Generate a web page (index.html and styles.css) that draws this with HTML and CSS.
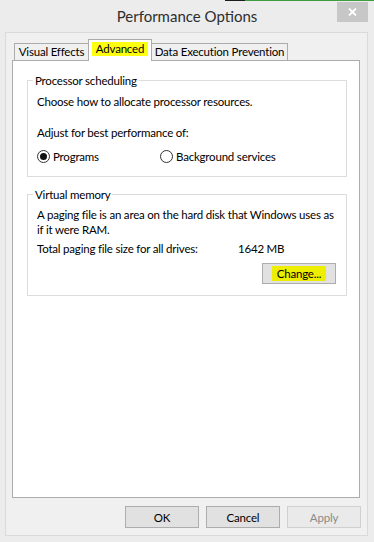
FILE: index.html
```html
<!DOCTYPE html>
<html lang="en">
<head>
<meta charset="UTF-8" />
<title>Performance Options</title>
<link rel="stylesheet" href="styles.css">
</head>
<body>

<div class="window">
  <div class="topedge"><span class="edge-dark"></span><span class="edge-green"></span></div>
  <div class="titlebar">
    <div class="title">Performance Options</div>
    <div class="close">
      <svg width="9" height="8" viewBox="0 0 9 8"><path d="M1 0.5 L8 7.5 M8 0.5 L1 7.5" stroke="#fff" stroke-width="1.8" fill="none"/></svg>
    </div>
  </div>

  <div class="panel">
    <div class="tabs">
      <div class="tab tab-first">Visual Effects</div>
      <div class="tab selected"><span class="mark">Advanced</span></div>
      <div class="tab tab-last">Data Execution Prevention</div>
    </div>

    <div class="page">
      <fieldset class="group group-cpu">
        <legend>Processor scheduling</legend>
        <div class="line first">Choose how to allocate processor resources.</div>
        <div class="line adjust">Adjust for best performance of:</div>
        <div class="radios">
          <label class="radio"><span class="dot checked"></span>Programs</label>
          <label class="radio second"><span class="dot"></span>Background services</label>
        </div>
      </fieldset>

      <fieldset class="group group-vm">
        <legend>Virtual memory</legend>
        <div class="para">A paging file is an area on the hard disk that Windows uses as if it were RAM.</div>
        <div class="total">
          <span class="total-label">Total paging file size for all drives:</span>
          <span>1642 MB</span>
        </div>
        <div class="change-row">
          <button class="btn"><span class="mark-soft">Change...</span></button>
        </div>
      </fieldset>
    </div>

    <div class="footer">
      <button class="btn">OK</button>
      <button class="btn">Cancel</button>
      <button class="btn disabled">Apply</button>
    </div>
  </div>
</div>

</body>
</html>
```

FILE: styles.css
```css
body {
  margin: 0;
  font-family: Lato, "Liberation Sans", sans-serif;
  font-size: 11.5px;
  letter-spacing: -0.2px;
  color: #000;
  background: #ececec;
}
.window {
  width: 374px;
  height: 542px;
  background: #ececec;
}
.topedge {
  height: 1px;
  display: flex;
  justify-content: flex-end;
}
.edge-dark {
  width: 20px;
  background: #1c1c1c;
}
.edge-green {
  width: 129px;
  background: #3f9c3f;
}
.titlebar {
  height: 31px;
  display: flex;
  align-items: flex-start;
  padding-left: 37px;
}
.title {
  flex: 1;
  text-align: center;
  font-size: 15px;
  letter-spacing: 0;
  line-height: 30px;
  color: #2e2e2e;
}
.close {
  width: 31px;
  height: 20px;
  margin-top: 1px;
  margin-right: 6px;
  background: #c7c7c7;
  display: flex;
  align-items: center;
  justify-content: center;
}
.panel {
  margin: 0 6px 0 5px;
  height: 504px;
  box-sizing: border-box;
  border: 1px solid #dadada;
  background: #f0f0f0;
}
.tabs {
  display: flex;
  align-items: flex-end;
  padding: 6px 0 0 8px;
  height: 27px;
  box-sizing: border-box;
}
.tab {
  height: 17px;
  box-sizing: border-box;
  border: 1px solid #acacac;
  border-bottom: none;
  background: #f0f0f0;
  line-height: 16px;
  text-align: center;
  white-space: nowrap;
}
.tab-first {
  width: 74px;
  border-right: none;
}
.tab-last {
  width: 136px;
  border-left: none;
}
.tab.selected {
  position: relative;
  z-index: 1;
  width: 64px;
  height: 22px;
  margin-bottom: -1px;
  background: #fff;
  line-height: 18px;
}
.mark {
  background: #ffff10;
  padding: 0 4px 1px;
}
.mark-soft {
  background: #eeee00;
  padding: 1px 5px;
}
.page {
  margin: 0 7px 0 6px;
  height: 438px;
  box-sizing: border-box;
  border: 1px solid #acacac;
  background: #fff;
  padding-top: 12px;
}
.group {
  margin: 0 12px 0 14px;
  padding: 0 0 0 9px;
  border: 1px solid #dcdcdc;
  min-width: 0;
}
.group legend {
  margin-left: -4px;
  padding: 0 2px;
  line-height: 15px;
}
.line {
  line-height: 15px;
}
.line.first {
  margin-top: 6px;
}
.line.adjust {
  margin-top: 16px;
}
.radios {
  display: flex;
  margin-top: 9px;
  padding-bottom: 12px;
}
.radio {
  display: flex;
  align-items: center;
  gap: 3px;
  line-height: 15px;
  width: 123px;
}
.radio.second {
  width: auto;
}
.dot {
  width: 13px;
  height: 13px;
  box-sizing: border-box;
  border: 1px solid #333;
  border-radius: 50%;
  display: flex;
  align-items: center;
  justify-content: center;
  background: #fff;
}
.dot.checked::after {
  content: "";
  width: 7px;
  height: 7px;
  border-radius: 50%;
  background: #111;
}
.group-vm {
  margin-top: 10px;
}
.para {
  margin-top: 5px;
  line-height: 15px;
  padding-right: 6px;
}
.total {
  display: flex;
  margin-top: 4px;
  line-height: 15px;
}
.total-label {
  width: 201px;
}
.change-row {
  display: flex;
  justify-content: flex-end;
  padding: 7px 10px 11px 0;
}
.btn {
  width: 74px;
  height: 22px;
  box-sizing: border-box;
  border: 1px solid #adadad;
  background: #e1e1e1;
  font-family: inherit;
  font-size: 11.5px;
  letter-spacing: -0.2px;
  color: #000;
  padding: 0;
}
.change-row .btn {
  height: 21px;
}
.btn.disabled {
  border-color: #d0d0d0;
  background: #eaeaea;
  color: #8a8a8a;
}
.footer {
  display: flex;
  justify-content: flex-end;
  gap: 7px;
  margin-top: 8px;
  padding-right: 6px;
}
```
